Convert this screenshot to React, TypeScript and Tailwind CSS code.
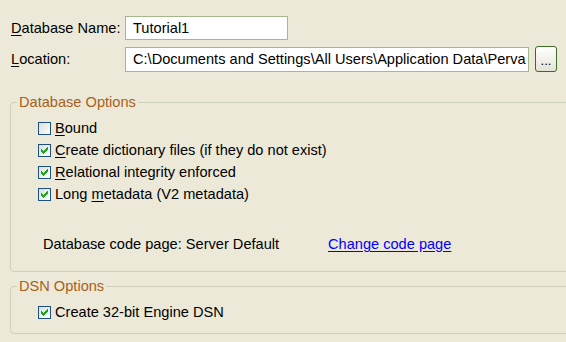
import React from "react";

const CHECK = [
  "......#",
  ".....##",
  "#...###",
  "##.###.",
  "#####..",
  ".###...",
  "..#....",
];

function CheckBox({ checked }: { checked: boolean }) {
  return (
    <div className="relative w-[13px] h-[13px] shrink-0 border border-[#1c5180] bg-linear-to-br from-[#dcdcd7] to-white">
      {checked && (
        <svg width="13" height="13" viewBox="0 0 13 13" className="absolute left-[-1px] top-[-1px]" shapeRendering="crispEdges">
          {CHECK.flatMap((row, y) =>
            row.split("").map((c, x) =>
              c === "#" ? <rect key={`${x}-${y}`} x={x + 3} y={y + 3} width="1" height="1" fill="#21a121" /> : null
            )
          )}
        </svg>
      )}
    </div>
  );
}

function U({ children }: { children: React.ReactNode }) {
  return <span className="underline underline-offset-[2px]">{children}</span>;
}

function CheckRow({ checked, children }: { checked: boolean; children: React.ReactNode }) {
  return (
    <div className="flex items-center h-[22px]">
      <CheckBox checked={checked} />
      <span className="ml-[4px] whitespace-nowrap">{children}</span>
    </div>
  );
}

export default function App() {
  return (
    <div
      className="w-[566px] h-[342px] bg-[#ece9d8] overflow-hidden text-[14.6px] leading-[16px] text-black"
      style={{ fontFamily: '"Liberation Sans", Arial, sans-serif' }}
    >
      <div className="pt-[16px] pl-[10px]">
        <div className="flex items-center h-[24px]">
          <div className="w-[115px] pl-[1px]">
            <U>D</U>atabase Name:
          </div>
          <div className="w-[163px] h-[24px] border border-[#a5b88a] bg-white flex items-center pl-[7px]">Tutorial1</div>
        </div>
        <div className="flex items-center h-[26px] mt-[6px]">
          <div className="w-[115px] pl-[1px]">
            <U>L</U>ocation:
          </div>
          <div className="w-[404px] h-[25px] border border-[#a5b88a] bg-white flex items-center pl-[7px] overflow-hidden whitespace-nowrap">
            C:\Documents and Settings\All Users\Application Data\Perva
          </div>
          <div className="ml-[6px] w-[22px] h-[26px] rounded-[3px] border border-[#3b6b24] bg-linear-to-b from-white to-[#e6e3d6] flex items-end justify-center pb-[5px] leading-[10px] text-[13px]">
            ...
          </div>
        </div>
      </div>

      <fieldset className="mt-[22px] ml-[10px] w-[570px] border border-[#d0d0bf] rounded-[4px] pl-[27px] pt-[7px] pb-[16px]">
        <legend className="ml-[-21px] px-[2px] text-[#a95f1b]">Database Options</legend>
        <CheckRow checked={false}>
          <U>B</U>ound
        </CheckRow>
        <CheckRow checked>
          <U>C</U>reate dictionary files (if they do not exist)
        </CheckRow>
        <CheckRow checked>
          <U>R</U>elational integrity enforced
        </CheckRow>
        <CheckRow checked>
          Long <U>m</U>etadata (V2 metadata)
        </CheckRow>
        <div className="flex items-center h-[22px] mt-[28px] ml-[5px]">
          <span className="w-[285px] whitespace-nowrap">Database code page: Server Default</span>
          <span className="text-[#0000ff] underline underline-offset-[2px] whitespace-nowrap">Change code page</span>
        </div>
      </fieldset>

      <fieldset className="mt-[6px] ml-[10px] w-[570px] border border-[#d0d0bf] rounded-[4px] pl-[27px] pt-[7px] pb-[10px]">
        <legend className="ml-[-21px] px-[2px] text-[#a95f1b]">DSN Options</legend>
        <CheckRow checked>Create 32-bit Engine DSN</CheckRow>
      </fieldset>
    </div>
  );
}
